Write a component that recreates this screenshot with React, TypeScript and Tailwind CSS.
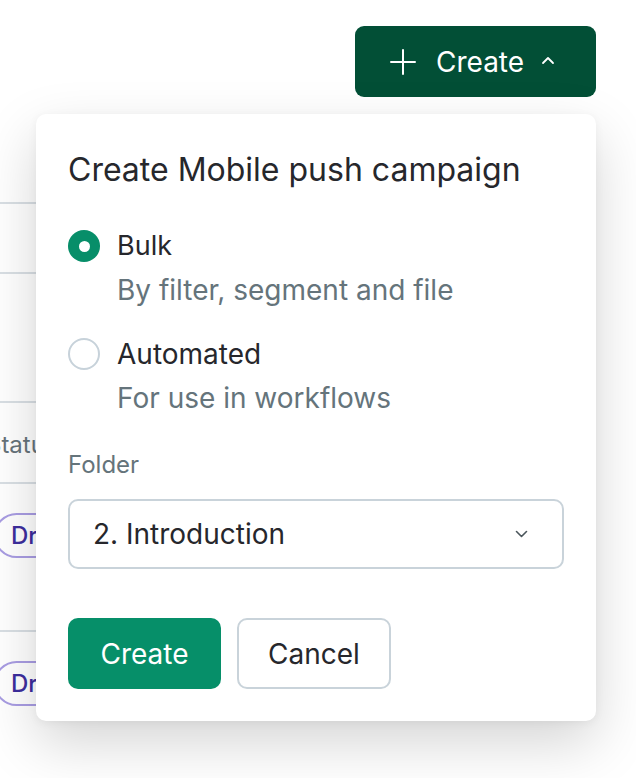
import React from 'react';

const rows = [
  { h: 'h-[70px]', content: null },
  { h: 'h-[129px]', content: null },
  { h: 'h-[81px]', content: 'status' },
  { h: 'h-[148px]', content: 'badge' },
  { h: 'h-[148px]', content: 'badge' },
];

function PlusIcon() {
  return (
    <svg width="26" height="26" viewBox="0 0 26 26" fill="none" stroke="currentColor" strokeWidth="2" strokeLinecap="round">
      <path d="M13 1v24M1 13h24" />
    </svg>
  );
}

function ChevronUp() {
  return (
    <svg width="14" height="9" viewBox="0 0 14 9" fill="none" stroke="currentColor" strokeWidth="1.8" strokeLinecap="round" strokeLinejoin="round">
      <path d="M2 7l5-5 5 5" />
    </svg>
  );
}

function ChevronDown() {
  return (
    <svg width="13" height="8" viewBox="0 0 13 8" fill="none" stroke="currentColor" strokeWidth="1.6" strokeLinecap="round" strokeLinejoin="round">
      <path d="M1.5 1.5l5 5 5-5" />
    </svg>
  );
}

function Radio({ checked }: { checked: boolean }) {
  return checked ? (
    <span className="flex shrink-0 w-[32px] h-[32px] rounded-full bg-[#078e69] items-center justify-center">
      <span className="w-[11px] h-[11px] rounded-full bg-white" />
    </span>
  ) : (
    <span className="block shrink-0 w-[32px] h-[32px] rounded-full border-2 border-[#c7d2da] bg-white" />
  );
}

export default function App() {
  return (
    <div className="relative w-[636px] h-[778px] overflow-hidden bg-white font-['Inter',sans-serif]">
      {/* page header */}
      <div className="h-[202px] flex justify-end items-start pt-[26px] pr-[40px]">
        <button className="flex items-center w-[241px] h-[71px] pl-[35px] gap-[20px] rounded-[9px] bg-[#024f36] text-white text-[28px]">
          <PlusIcon />
          <span>Create</span>
          <span className="-ml-[3px] mb-[2px]">
            <ChevronUp />
          </span>
        </button>
      </div>

      {/* table behind popover */}
      <div className="flex flex-col w-[560px]">
        {rows.map((row, i) => (
          <div key={i} className={`${row.h} border-t-2 border-[#d9dfe4]`}>
            {row.content === 'status' && (
              <div className="pt-[24px] -ml-[14px] text-[24px] text-[#66737a] whitespace-nowrap">Status</div>
            )}
            {row.content === 'badge' && (
              <div className="pt-[29px]">
                <span className="-ml-[6px] inline-flex items-center h-[45px] pl-[15px] pr-[20px] rounded-full border-2 border-[#a99de3] text-[24px] font-medium text-[#3d2e9e]">
                  Draft
                </span>
              </div>
            )}
          </div>
        ))}
      </div>

      {/* popover */}
      <div className="absolute left-[36px] top-[114px] w-[560px] h-[607px] rounded-[10px] bg-white shadow-[0_22px_56px_rgba(0,0,0,0.17),0_2px_10px_rgba(0,0,0,0.05)] px-[32px] pt-[36px]">
        <h2 className="text-[32px] leading-[40px] text-[#26272c] whitespace-nowrap">Create Mobile push campaign</h2>

        <div className="mt-[40px] flex flex-col gap-[32px]">
          <div className="flex gap-[17px]">
            <Radio checked />
            <div className="flex flex-col gap-[12px]">
              <span className="text-[27px] leading-[32px] text-[#26272c]">Bulk</span>
              <span className="text-[28px] leading-[32px] text-[#65747b]">By filter, segment and file</span>
            </div>
          </div>
          <div className="flex gap-[17px]">
            <Radio checked={false} />
            <div className="flex flex-col gap-[12px]">
              <span className="text-[28px] leading-[32px] text-[#26272c]">Automated</span>
              <span className="text-[28px] leading-[32px] text-[#65747b]">For use in workflows</span>
            </div>
          </div>
        </div>

        <div className="mt-[37px] text-[24px] leading-[28px] text-[#65747b]">Folder</div>
        <div className="mt-[20px] flex items-center justify-between h-[70px] rounded-[10px] border-2 border-[#c9d3da] pl-[23px] pr-[34px]">
          <span className="text-[28px] text-[#26272c]">2. Introduction</span>
          <span className="text-[#4b565c]">
            <ChevronDown />
          </span>
        </div>

        <div className="mt-[49px] flex gap-[16px]">
          <button className="w-[153px] h-[71px] rounded-[10px] bg-[#068f69] text-white text-[28px]">Create</button>
          <button className="w-[154px] h-[71px] rounded-[10px] border-2 border-[#c9d3da] bg-white text-[#26272c] text-[28px]">Cancel</button>
        </div>
      </div>
    </div>
  );
}
